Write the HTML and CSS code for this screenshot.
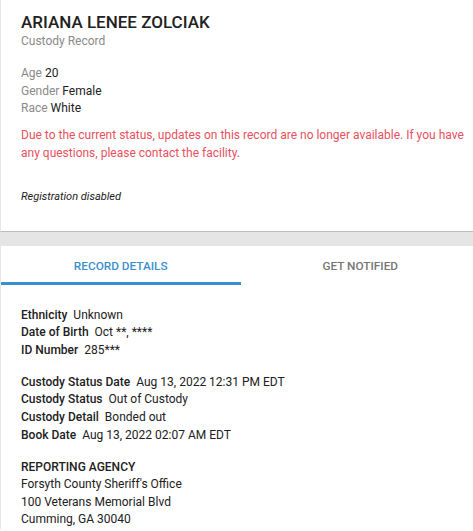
FILE: index.html
```html
<!DOCTYPE html>
<html>
<head>
<meta charset="utf-8">
<link rel="stylesheet" href="styles.css">
</head>
<body>
<div class="page">
<div class="card">
  <h1 class="name">ARIANA LENEE ZOLCIAK</h1>
  <div class="sub">Custody Record</div>
  <div class="facts">
    <div><span class="k">Age</span> <span class="v">20</span></div>
    <div><span class="k">Gender</span> <span class="v">Female</span></div>
    <div><span class="k">Race</span> <span class="v">White</span></div>
  </div>
  <p class="warn">Due to the current status, updates on this record are no longer available. If you have any questions, please contact the facility.</p>
  <p class="reg">Registration disabled</p>
</div>
<div class="band"></div>
<div class="panel">
  <div class="tabs">
    <div class="tab active">RECORD DETAILS</div>
    <div class="tab">GET NOTIFIED</div>
  </div>
  <div class="details">
    <div class="group">
      <div class="row"><span class="lbl">Ethnicity</span> Unknown</div>
      <div class="row"><span class="lbl">Date of Birth</span> Oct **, ****</div>
      <div class="row"><span class="lbl">ID Number</span> 285***</div>
    </div>
    <div class="group">
      <div class="row"><span class="lbl">Custody Status Date</span> Aug 13, 2022 12:31 PM EDT</div>
      <div class="row"><span class="lbl">Custody Status</span> Out of Custody</div>
      <div class="row"><span class="lbl">Custody Detail</span> Bonded out</div>
      <div class="row"><span class="lbl">Book Date</span> Aug 13, 2022 02:07 AM EDT</div>
    </div>
    <div class="group">
      <div class="row"><span class="lbl">REPORTING AGENCY</span></div>
      <div class="row">Forsyth County Sheriff's Office</div>
      <div class="row">100 Veterans Memorial Blvd</div>
      <div class="row">Cumming, GA 30040</div>
    </div>
  </div>
</div>
</div>
</body>
</html>
```
FILE: styles.css
```css
html, body {
  margin: 0;
  padding: 0;
  background: #fff;
  overflow: hidden;
}
body {
  font-family: Roboto, "Liberation Sans", Arial, sans-serif;
  color: #212121;
}
.page {
  width: 480px;
}
.card {
  box-sizing: border-box;
  height: 232px;
  border-left: 1px solid #e6e6e6;
  border-bottom: 1px solid #bdbdbd;
  padding: 11px 12px 0 20px;
}
.name {
  margin: 0;
  font-size: 17px;
  font-weight: 500;
  line-height: 22px;
  color: #212121;
}
.sub {
  font-size: 12px;
  color: #8a8a8a;
  line-height: 17px;
}
.facts {
  margin-top: 15px;
  font-size: 12px;
  line-height: 17.5px;
}
.k { color: #8a8a8a; }
.v { color: #212121; }
.warn {
  margin: 8px 0 0 0;
  font-size: 12px;
  line-height: 18px;
  color: #e9505c;
}
.reg {
  margin: 27px 0 0 0;
  font-size: 11px;
  font-style: italic;
  line-height: 16px;
  color: #212121;
}
.band {
  height: 14px;
  background: #e5e5e5;
}
.panel {
  border-left: 1px solid #e6e6e6;
}
.tabs {
  display: flex;
  height: 39px;
}
.tab {
  flex: 1;
  display: flex;
  align-items: center;
  justify-content: center;
  font-size: 11.8px;
  font-weight: 500;
  color: #757575;
  box-sizing: border-box;
  padding-top: 1px;
}
.tab.active {
  color: #3a8fcf;
  border-bottom: 3px solid #3a8fcf;
  padding-top: 4px;
}
.details {
  padding: 21.5px 20px 0 20px;
  font-size: 12px;
  line-height: 17.6px;
  color: #212121;
}
.group + .group {
  margin-top: 14.5px;
}
.lbl {
  font-weight: 500;
  margin-right: 3px;
}
```
